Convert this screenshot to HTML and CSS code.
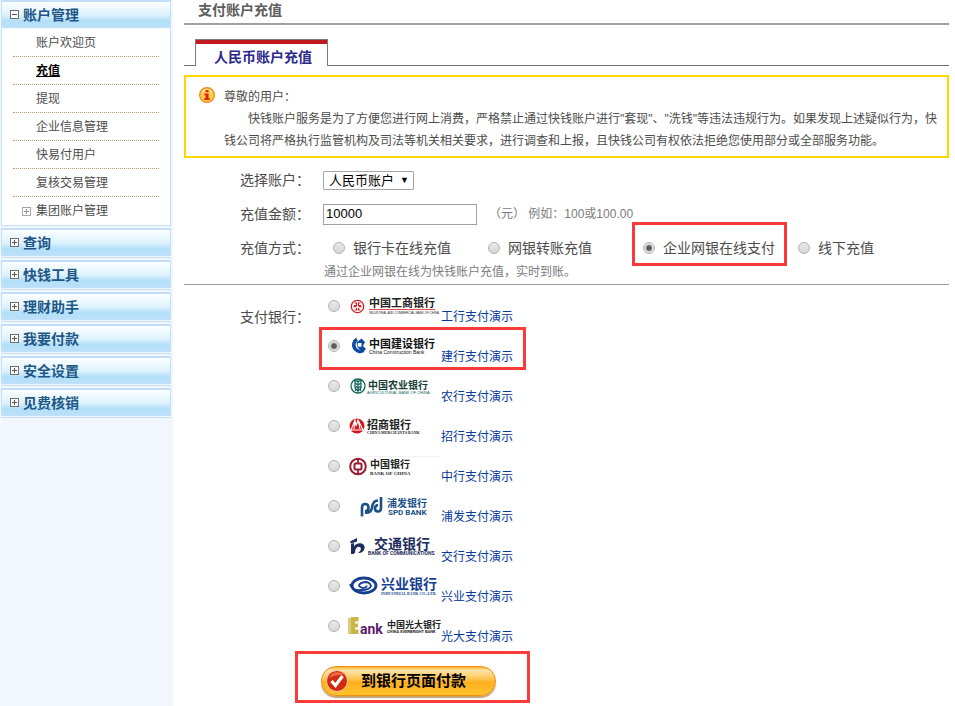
FILE: index.html
```html
<!DOCTYPE html>
<html lang="zh-CN">
<head>
<meta charset="utf-8">
<title>支付账户充值</title>
<link rel="stylesheet" href="styles.css">
</head>
<body>
<div class="page">
  <nav class="sidebar">
    <section class="group">
      <h2 class="group-head"><button type="button"><span class="toggle open"></span>账户管理</button></h2>
      <ul class="menu">
        <li><a href="#">账户欢迎页</a></li>
        <li><a href="#" class="current">充值</a></li>
        <li><a href="#">提现</a></li>
        <li><a href="#">企业信息管理</a></li>
        <li><a href="#">快易付用户</a></li>
        <li><a href="#">复核交易管理</a></li>
        <li class="nested"><span class="toggle"></span><a href="#">集团账户管理</a></li>
      </ul>
    </section>
    <section class="group closed"><h2 class="group-head"><button type="button"><span class="toggle"></span>查询</button></h2></section>
    <section class="group closed"><h2 class="group-head"><button type="button"><span class="toggle"></span>快钱工具</button></h2></section>
    <section class="group closed"><h2 class="group-head"><button type="button"><span class="toggle"></span>理财助手</button></h2></section>
    <section class="group closed"><h2 class="group-head"><button type="button"><span class="toggle"></span>我要付款</button></h2></section>
    <section class="group closed"><h2 class="group-head"><button type="button"><span class="toggle"></span>安全设置</button></h2></section>
    <section class="group closed"><h2 class="group-head"><button type="button"><span class="toggle"></span>见费核销</button></h2></section>
  </nav>

  <main class="content">
    <h1 class="title">支付账户充值</h1>
    <div class="tabs"><a href="#" class="tab">人民币账户充值</a></div>

    <div class="notice">
      <svg class="notice-icon" viewBox="0 0 16 16" aria-hidden="true">
        <circle cx="8" cy="8" r="7.3" fill="#ffd04a" stroke="#f58a1f" stroke-width="1.4"/>
        <path d="M3 6a5.4 5.4 0 0 1 10 0" fill="none" stroke="#ffe9a0" stroke-width="1.5"/>
        <path d="M6.6 3h3v2.2h-3zM5.4 6.4h4.2v4.8h1.2V13H5.2v-1.8h1.3v-3H5.4z" fill="#e8200e"/>
      </svg>
      <div class="notice-text">
        <p>尊敬的用户：</p>
        <p class="indent">快钱账户服务是为了方便您进行网上消费，严格禁止通过快钱账户进行"套现"、"洗钱"等违法违规行为。如果发现上述疑似行为，快钱公司将严格执行监管机构及司法等机关相关要求，进行调查和上报，且快钱公司有权依法拒绝您使用部分或全部服务功能。</p>
      </div>
    </div>

    <form>
      <div class="fields">
        <div class="row">
          <label class="label" for="account">选择账户：</label>
          <span class="select"><select id="account"><option>人民币账户</option></select></span>
        </div>
        <div class="row">
          <label class="label" for="amount">充值金额：</label>
          <input class="amount" id="amount" type="text" value="10000">
          <span class="hint">（元） 例如：100或100.00</span>
        </div>
        <div class="row">
          <span class="label">充值方式：</span>
          <div class="methods">
            <label class="method"><input type="radio" name="method">银行卡在线充值</label>
            <label class="method"><input type="radio" name="method">网银转账充值</label>
            <label class="method marked"><input type="radio" name="method" checked>企业网银在线支付</label>
            <label class="method"><input type="radio" name="method">线下充值</label>
          </div>
        </div>
        <p class="method-note">通过企业网银在线为快钱账户充值，实时到账。</p>
      </div>

      <div class="banks">
        <span class="label bank-label">支付银行：</span>
        <ul class="bank-list">
          <li class="bank">
            <input type="radio" name="bank" id="icbc">
            <label for="icbc"><svg class="logo" viewBox="0 0 93 30">
              <circle cx="9.500" cy="15.500" r="6.200" fill="#fff" stroke="#cf2027" stroke-width="1.300"/>
              <path d="M6.500 12h2v2.500h-2.500M12.500 12h-2v2.500H13M5.500 15.700h3M10.500 15.700h3M6.500 19h2v-2M12.500 19h-2v-2" fill="none" stroke="#cf2027" stroke-width="1.200"/>
              <text x="21" y="16" class="cn s11" fill="#222">中国工商银行</text>
              <path d="M21 18.500h66" stroke="#e0494e"/>
              <text x="21" y="23" class="en s3" fill="#222">INDUSTRIAL AND COMMERCIAL BANK OF CHINA</text>
            </svg></label>
            <a href="#">工行支付演示</a>
          </li>
          <li class="bank marked">
            <input type="radio" name="bank" id="ccb" checked>
            <label for="ccb"><svg class="logo" viewBox="0 0 93 30">
              <path d="M9 8.200A6 6 0 1 0 15.500 19.500" fill="none" stroke="#0c4da2" stroke-width="3.600"/>
              <path d="M8.500 11.500l5-4 3.500 3.500-2 4 3 3-3 3-5.500-4.500z" fill="#0c4da2"/>
              <path d="M9.800 12h3.700v3.700H9.800z" fill="#fff"/>
              <text x="21" y="17" class="cn s11" fill="#111">中国建设银行</text>
              <text x="21" y="23" class="en s5" fill="#111">China Construction Bank</text>
            </svg></label>
            <a href="#">建行支付演示</a>
          </li>
          <li class="bank">
            <input type="radio" name="bank" id="abc">
            <label for="abc"><svg class="logo" viewBox="0 0 93 30">
              <circle cx="10" cy="15" r="7" fill="#fff" stroke="#12685a" stroke-width="1.300"/>
              <path d="M10 8v14M10 11L7 9v8l3 3 3-3V9zM7 12l3 2 3-2M7 15l3 2 3-2M7.500 17.500v2.500M12.500 17.500v2.500" fill="none" stroke="#12685a" stroke-width="1.200"/>
              <text x="20" y="18" class="cn s10" fill="#173d36">中国农业银行</text>
              <text x="19" y="23" class="en s4" fill="#12685a">AGRICULTURAL BANK OF CHINA</text>
            </svg></label>
            <a href="#">农行支付演示</a>
          </li>
          <li class="bank">
            <input type="radio" name="bank" id="cmb">
            <label for="cmb"><svg class="logo" viewBox="0 0 93 30">
              <circle cx="9" cy="15" r="7.500" fill="#d8131d"/>
              <path d="M1 19h16M3 19l4-10 1 6 2-6 5 10M7 9L6 18M10 9l2 9" fill="none" stroke="#fff" stroke-width="1.100"/>
              <text x="19" y="18" class="cn s11" fill="#222">招商银行</text>
              <text x="19" y="23" class="serif s4" fill="#222">CHINA MERCHANTS BANK</text>
            </svg></label>
            <a href="#">招行支付演示</a>
          </li>
          <li class="bank">
            <input type="radio" name="bank" id="boc">
            <label for="boc"><svg class="logo" viewBox="0 0 93 30">
              <path d="M0 5.500h92" stroke="#f2f2f2"/>
              <circle cx="10" cy="15.500" r="7.800" fill="#fff" stroke="#9b1b30" stroke-width="2"/>
              <path d="M10 8v4.500M10 18.500V23" stroke="#9b1b30" stroke-width="1.800"/>
              <rect x="6.500" y="12.500" width="7" height="6" rx="1" fill="#fff" stroke="#9b1b30" stroke-width="2"/>
              <text x="22" y="17" class="cn s10" fill="#222">中国银行</text>
              <text x="22" y="24" class="serif s5" fill="#222">BANK OF CHINA</text>
            </svg></label>
            <a href="#">中行支付演示</a>
          </li>
          <li class="bank">
            <input type="radio" name="bank" id="spd">
            <label for="spd"><svg class="logo" viewBox="0 0 93 30">
              <path d="M14 25.500v-9q0-3.500 3-3.500 3.500 0 3.500 3.500T17 20.500M33 6v11q0 3.500-3 3.500T27 17.500q0-3 3-3.500M17 21.500q6 1 7-5 1-7 6-7" fill="none" stroke="#1b4f86" stroke-width="2.600"/>
              <text x="39" y="16" class="cn s10" fill="#1b4f86">浦发银行</text>
              <text x="40" y="24" class="roboto s8" fill="#1b4f86">SPD BANK</text>
            </svg></label>
            <a href="#">浦发支付演示</a>
          </li>
          <li class="bank">
            <input type="radio" name="bank" id="bocom">
            <label for="bocom"><svg class="logo" viewBox="0 0 93 30">
              <path d="M2 10.500l7-3.500v3.500l-6 2zM3 13l3-1v11H3z" fill="#1d2c5c"/>
              <path d="M7 14q3-2.500 7-1.500 4 2 2 6.500-2 3.500-6 3 3-2 3-4.500-1-2.500-3.500-1.500Q7 17.500 7 22H5q-.5-5 2-8z" fill="#1d2c5c"/>
              <text x="26" y="18" class="cn s14" fill="#1d2c5c">交通银行</text>
              <text x="20" y="24" class="roboto s5" fill="#1d2c5c">BANK OF COMMUNICATIONS</text>
            </svg></label>
            <a href="#">交行支付演示</a>
          </li>
          <li class="bank">
            <input type="radio" name="bank" id="cib">
            <label for="cib"><svg class="logo" viewBox="0 0 93 30">
              <ellipse cx="16" cy="14.500" rx="12" ry="7.500" fill="none" stroke="#173f91" stroke-width="2.800"/>
              <path d="M2 13q2 7 11 6 9 0 10-4-1-4-6-4-6 1-6 4 2 2.500 6 1.500 2-.5 1.500-2" fill="none" stroke="#173f91" stroke-width="1.800"/>
              <text x="33" y="18" class="cn s14" fill="#173f91">兴业银行</text>
              <text x="33" y="24" class="serif s4" fill="#173f91">INDUSTRIAL BANK CO.,LTD.</text>
            </svg></label>
            <a href="#">兴业支付演示</a>
          </li>
          <li class="bank">
            <input type="radio" name="bank" id="ceb">
            <label for="ceb"><svg class="logo" viewBox="0 0 93 30">
              <path d="M0 7h5v16H0z" fill="#d9cc7a"/>
              <path d="M3 6h7.500v4.500H7v2h3v4H7v2h3.500V23H3z" fill="#c9b548"/>
              <text x="12" y="23" class="roboto s14" fill="#5b1a6e">ank</text>
              <text x="39" y="17" class="cn s9" fill="#222">中国光大银行</text>
              <text x="39" y="22" class="roboto s4" fill="#222">CHINA EVERBRIGHT BANK</text>
            </svg></label>
            <a href="#">光大支付演示</a>
          </li>
        </ul>
      </div>

      <div class="submit-frame">
        <button class="submit" type="submit">
          <svg viewBox="0 0 24 24" aria-hidden="true">
            <circle cx="12" cy="12" r="10.500" fill="#d22c10" stroke="#f9c9a0"/>
            <path d="M4 9a9 9 0 0 1 15-3q-7-1-15 3z" fill="#ee6a45"/>
            <path d="M6.500 12l4 4.500L17.500 7" fill="none" stroke="#fff" stroke-width="3.200"/>
          </svg>
          <span>到银行页面付款</span>
        </button>
      </div>
    </form>
  </main>
</div>
</body>
</html>
```
FILE: styles.css
```css
* { box-sizing: border-box; }

body {
  margin: 0;
  background: #fff;
  color: #4c4c4c;
  font: 12px/22px "Liberation Sans", "Noto Sans CJK SC", sans-serif;
}

h1, h2, p, ul { margin: 0; padding: 0; }
ul { list-style: none; }
a { color: inherit; text-decoration: none; }
button, input, select { font: inherit; color: inherit; margin: 0; }

.page { display: flex; min-height: 100vh; }

/* Sidebar */
.sidebar {
  flex: none;
  width: 173px;
  padding: 0 2px 0 1px;
  background: #f2f6ff;
}
.group { margin-bottom: 2px; }
.group.closed { border-bottom: 1px solid #c5dffb; padding-bottom: 1px; }
.group-head {
  border: 1px solid #c5dffb;
  border-top-width: 2px;
  background: linear-gradient(#fbfeff, #dff2fd 50%, #b3dff8 75%, #b9e1f9);
}
.group-head button {
  display: flex;
  align-items: center;
  gap: 4px;
  width: 100%;
  height: 25px;
  padding: 0 8px;
  border: 0;
  background: none;
  color: #1d5787;
  font-size: 14px;
  font-weight: bold;
}
.toggle {
  flex: none;
  width: 9px;
  height: 9px;
  border: 1px solid #6e6e6e;
  background:
    linear-gradient(#555, #555) center / 5px 1px no-repeat,
    linear-gradient(#555, #555) center / 1px 5px no-repeat,
    #fff;
}
.toggle.open { background: linear-gradient(#555, #555) center / 5px 1px no-repeat, #fff; }
.menu {
  margin-top: 1px;
  padding: 0 11px;
  border: 1px solid #c5dffb;
  border-top: 0;
  background: #fff;
}
.menu li {
  display: flex;
  align-items: center;
  height: 28px;
  padding-left: 23px;
  border-bottom: 1px dotted #b59a68;
}
.menu li:last-child { border-bottom: 0; }
.menu .nested { padding-left: 9px; gap: 5px; }
.menu .toggle { opacity: 0.6; }
.menu .current { color: #000; font-weight: bold; text-decoration: underline; }

/* Main column */
.content { flex: 1; min-width: 0; padding: 0 6px 0 11px; }
.title {
  height: 25px;
  padding-left: 14px;
  border-bottom: 2px solid #a0a0a0;
  color: #5c5c5c;
  font-size: 14px;
  line-height: 21px;
}
.tabs {
  display: flex;
  height: 41px;
  padding: 14px 11px 0;
  border-bottom: 1px solid #7b6c66;
}
.tab {
  height: 27px;
  padding: 0 15px 0 18px;
  border: 1px solid #7d7d7d;
  border-bottom: 0;
  background: linear-gradient(#c01920 4px, #fff 4px);
  color: #2b2a8c;
  font-size: 14px;
  font-weight: bold;
  line-height: 34px;
}
.notice {
  display: flex;
  gap: 9px;
  margin-top: 9px;
  padding: 9px 6px 4px 13px;
  border: 2px solid #ffd600;
}
.notice-icon { flex: none; width: 16px; height: 16px; margin-top: 1px; }
.indent { text-indent: 24px; }

/* Form */
.fields {
  padding: 5px 0 0 56px;
  border-bottom: 1px solid #999;
}
.row { display: flex; align-items: center; height: 34px; }
.label {
  flex: none;
  width: 82px;
  font-size: 14px;
}
.select { position: relative; margin-left: 1px; }
.select::after {
  content: "▼";
  position: absolute;
  right: 5px;
  top: 0;
  color: #000;
  font-size: 9px;
  line-height: 18px;
  pointer-events: none;
}
.select select {
  display: block;
  width: 91px;
  height: 19px;
  padding: 0 5px;
  border: 1px solid #a6a6a6;
  border-radius: 1px;
  background: #fff;
  color: #000;
  font-size: 13px;
  line-height: 17px;
  appearance: none;
}
.amount {
  width: 154px;
  height: 21px;
  margin-left: 1px;
  padding: 0 2px;
  border: 1px solid #a0a0a0;
  color: #000;
  font-size: 13px;
}
.hint { margin-left: 12px; color: #7c7c7c; }

input[type="radio"] {
  flex: none;
  width: 12px;
  height: 12px;
  border: 1px solid #b2b2b2;
  border-radius: 50%;
  background: linear-gradient(#e9e9e9, #d7d7d7);
  appearance: none;
}
input[type="radio"]:checked {
  background: radial-gradient(circle, #5a5a5a 2px, #e6e6e6 4px);
}
.methods { display: flex; }
.method {
  display: flex;
  align-items: center;
  gap: 8px;
  width: 155px;
  padding-left: 11px;
  font-size: 14px;
  white-space: nowrap;
}
.marked { position: relative; }
.marked::after {
  content: "";
  position: absolute;
  border: 3px solid #fb3a3a;
  pointer-events: none;
}
.method.marked::after { inset: -15px 0 -7px; }
.method-note { padding: 0 0 5px 84px; line-height: 14px; color: #7c7c7c; }

.banks { display: flex; padding: 1px 0 0 56px; }
.bank-label { margin-top: 20px; }
.bank { display: flex; align-items: center; height: 40px; padding-left: 6px; }
.bank label { margin-left: 8px; }
.bank a { margin: 22px 0 0; color: #03399b; }
.bank.marked::after { inset: 1px -13px -4px -3px; }
.logo { display: block; width: 93px; height: 30px; }
.cn { font-family: "Noto Sans CJK SC", sans-serif; font-weight: bold; }
.en { font-family: "Liberation Sans", sans-serif; }
.roboto { font-family: Roboto, sans-serif; font-weight: bold; }
.serif { font-family: "Liberation Serif", serif; font-weight: bold; }
.s3 { font-size: 3px; }
.s4 { font-size: 4px; }
.s5 { font-size: 5px; }
.s8 { font-size: 8px; }
.s9 { font-size: 9px; }
.s10 { font-size: 10px; }
.s11 { font-size: 11px; }
.s14 { font-size: 14px; }

.submit-frame {
  width: fit-content;
  margin: 5px 0 0 111px;
  padding: 12px 31px 4px 23px;
  border: 3px solid #fb3a3a;
}
.submit {
  display: flex;
  align-items: center;
  gap: 12px;
  height: 30px;
  padding: 0 29px 0 3px;
  border: 1px solid #f08c14;
  border-radius: 15px;
  background: linear-gradient(#ffb52e, #ffe3a8 12%, #ffc85a 40%, #ffb01e 55%, #ffc32a);
  box-shadow: 0 2px 1px #c9a26a;
  color: #000;
  font-size: 15px;
  font-weight: bold;
}
.submit svg { width: 24px; height: 24px; }
```
